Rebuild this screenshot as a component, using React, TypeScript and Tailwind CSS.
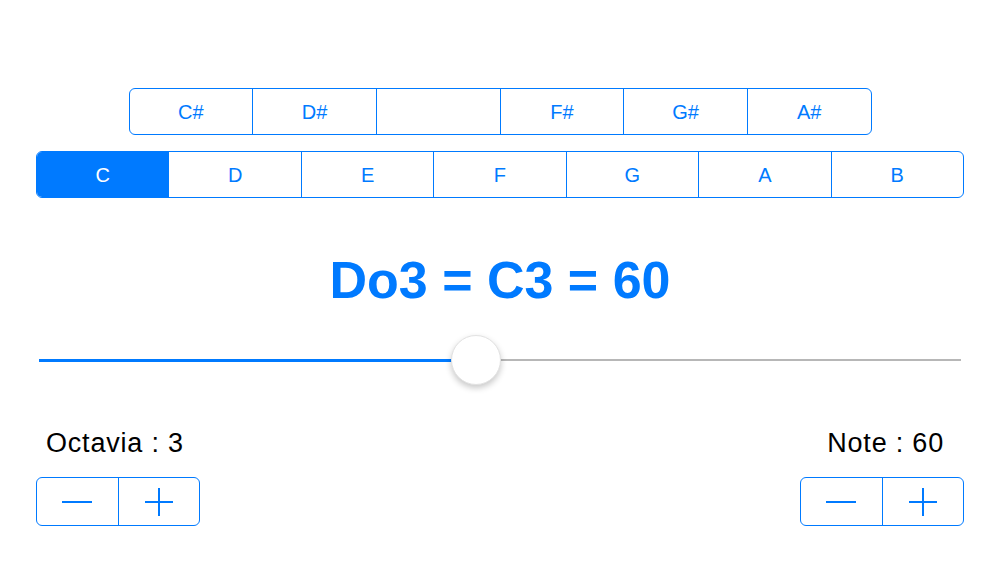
import { useState } from "react";

const SHARPS = ["C#", "D#", "", "F#", "G#", "A#"];
const NATURALS = ["C", "D", "E", "F", "G", "A", "B"];

function Stepper() {
  return (
    <div className="flex h-[49px] w-[164px] rounded-[6px] border-[1.5px] border-[#007aff]">
      <button className="flex flex-1 items-center justify-center border-r-[1.5px] border-[#007aff]">
        <svg width="30" height="4" viewBox="0 0 30 4">
          <rect x="0" y="1" width="30" height="2" fill="#007aff" />
        </svg>
      </button>
      <button className="flex flex-1 items-center justify-center">
        <svg width="28" height="28" viewBox="0 0 28 28">
          <rect x="0" y="13" width="28" height="2" fill="#007aff" />
          <rect x="13" y="0" width="2" height="28" fill="#007aff" />
        </svg>
      </button>
    </div>
  );
}

export default function App() {
  const [note, setNote] = useState("C");
  const pct = 47.4;

  return (
    <div
      className="h-[563px] w-[1000px] bg-white pt-[88px]"
      style={{ fontFamily: '"Liberation Sans", Arial, sans-serif' }}
    >
      {/* sharps */}
      <div className="mx-auto flex h-[47px] w-[743px] rounded-[6px] border-[1.5px] border-[#007aff]">
        {SHARPS.map((s, i) => (
          <div
            key={i}
            className={`flex flex-1 items-center justify-center text-[20px] text-[#007aff] ${
              i < SHARPS.length - 1 ? "border-r-[1.5px] border-[#007aff]" : ""
            }`}
          >
            {s}
          </div>
        ))}
      </div>

      {/* naturals */}
      <div className="mx-[36px] mt-[16px] flex h-[47px] overflow-hidden rounded-[6px] border-[1.5px] border-[#007aff]">
        {NATURALS.map((n, i) => (
          <button
            key={n}
            onClick={() => setNote(n)}
            className={`flex flex-1 items-center justify-center text-[20px] ${
              note === n ? "bg-[#007aff] text-white" : "text-[#007aff]"
            } ${i < NATURALS.length - 1 ? "border-r-[1.5px] border-[#007aff]" : ""}`}
          >
            {n}
          </button>
        ))}
      </div>

      {/* title */}
      <div className="mt-[52px] text-center text-[52px] font-bold leading-[60px] text-[#007aff]">
        Do3 = C3 = 60
      </div>

      {/* slider */}
      <div className="relative mx-[39px] mt-[48px] h-[4px]">
        <div className="flex h-full items-center">
          <div className="h-[3px] bg-[#007aff]" style={{ width: `${pct}%` }} />
          <div className="h-[2px] flex-1 bg-[#b7b7b7]" />
        </div>
        <div
          className="absolute top-1/2 h-[50px] w-[50px] -translate-x-1/2 -translate-y-1/2 rounded-full border border-[#e2e2e2] bg-white shadow-[0_3px_6px_rgba(0,0,0,0.22)]"
          style={{ left: `${pct}%` }}
        />
      </div>

      {/* labels */}
      <div className="mt-[66px] flex justify-between pl-[46px] pr-[56px] text-[27px] leading-[30px] tracking-[0.8px] text-black">
        <span>Octavia : 3</span>
        <span>Note : 60</span>
      </div>

      {/* steppers */}
      <div className="mt-[19px] flex justify-between px-[36px]">
        <Stepper />
        <Stepper />
      </div>
    </div>
  );
}
